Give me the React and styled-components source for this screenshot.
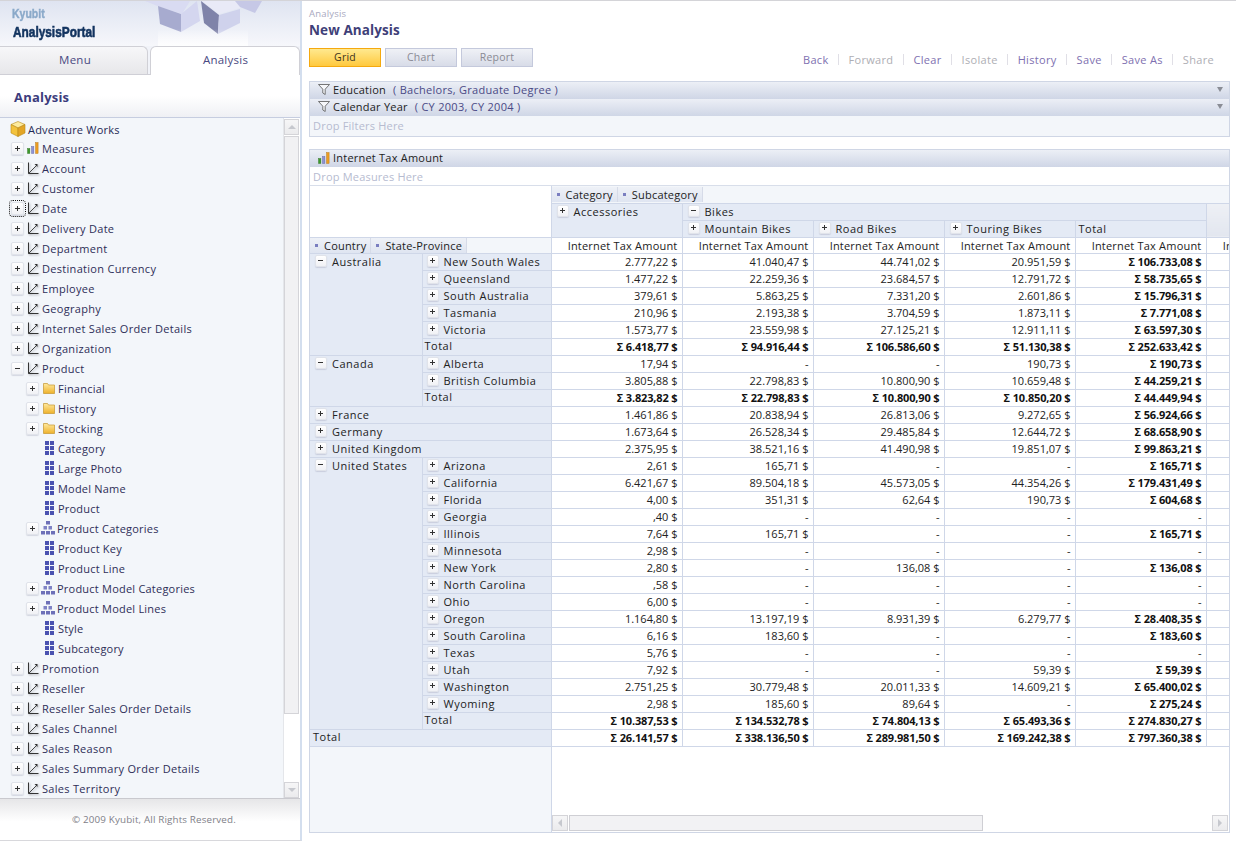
import React from "react";
import styled, { createGlobalStyle } from "styled-components";

const Global = createGlobalStyle`
  html, body { margin: 0; padding: 0; background: #fff; }
  body { font-family: "Open Sans", "Noto Sans", sans-serif; font-size: 11px; color: #222; overflow: hidden; }
  * { box-sizing: border-box; }
`;

const Page = styled.div`
  display: flex; width: 1236px; height: 841px; overflow: hidden; border-top: 1px solid #d4d4d8;
`;
const Sidebar = styled.aside`
  width: 302px; flex: none; display: flex; flex-direction: column;
  border-right: 2px solid #d3deee; border-bottom: 1px solid #d8d8dc; background: #fff;
`;
const Banner = styled.div`
  position: relative; height: 45px; flex: none; overflow: hidden;
  padding: 7px 0 0 12px;
  background: linear-gradient(180deg, #dfe4f1 0%, #f6f7fb 100%);
`;
const BannerArt = styled.svg`
  position: absolute; left: 140px; top: 0; width: 160px; height: 46px;
`;
const LogoSmall = styled.div`
  font-family: "Liberation Sans", sans-serif; transform: scaleX(.84); transform-origin: left center;
  font-weight: 700; font-size: 12.5px; line-height: 13px; color: #8aa9c9; -webkit-text-stroke: .4px #8aa9c9;
`;
const LogoBig = styled.div`
  font-family: "Liberation Sans", sans-serif; transform: scaleX(.79); transform-origin: left center;
  margin: 2px 0 0 1px;
  font-weight: 700; font-size: 15px; line-height: 17px; color: #12335f; -webkit-text-stroke: .6px #12335f;
`;
const Tabs = styled.div`
  height: 29px; flex: none; display: flex; align-items: flex-end; gap: 2px;
  background: #f1f3f9; border-bottom: 1px solid #cfcfd6;
`;
const Tab = styled.div`
  flex: ${p => (p.$active ? "1" : "none")}; width: ${p => (p.$active ? "auto" : "148px")};
  height: ${p => (p.$active ? "29px" : "28px")};
  margin-bottom: ${p => (p.$active ? "-1px" : "0")};
  display: flex; align-items: center; justify-content: center;
  padding: ${p => (p.$active ? "0 0 3px 1px" : "0 0 2px 3px")};
  font-size: 11.5px; letter-spacing: .25px; color: #4a4a82;
  border: 1px solid #d0d0d6; border-bottom: ${p => (p.$active ? "none" : "0")};
  border-left: ${p => (p.$active ? "1px solid #d0d0d6" : "none")};
  border-radius: ${p => (p.$active ? "6px 6px 0 0" : "0 6px 0 0")};
  background: ${p => (p.$active ? "#fff" : "linear-gradient(#f7f7f9, #e7e7ea)")};
`;
const PanelTitle = styled.div`
  height: 43px; flex: none; padding: 14px 0 0 14px;
  font-weight: 700; font-size: 13px; line-height: 17px; color: #3c3c7c; letter-spacing: .2px;
  background: linear-gradient(#fff 50%, #eff0f4 100%);
  border-bottom: 1px solid #c6cde0;
`;
const TreeArea = styled.div`
  flex: 1; min-height: 0; display: flex; background: #f3f6fa;
  border-bottom: 1px solid #c9c9ce;
`;
const TreeList = styled.div`
  flex: 1; min-width: 0; overflow: hidden;
`;
const Row = styled.div`
  height: 20px; display: flex; align-items: center; white-space: nowrap;
  padding-left: ${p => p.$indent}px;
  font-size: 11px; color: #2e2e58; letter-spacing: ${p => p.$track ?? 0.3}px;
`;
const Root = styled(Row)`
  padding: 2px 0 0 10px; gap: 2px; color: #1f2a55; letter-spacing: .2px;
`;
const Label = styled.span`
  display: inline-flex; margin-left: ${p => p.$gap}px;
`;
const Exp = styled.span`
  position: relative; width: 13px; height: 13px; flex: none; display: block;
  border: 1px solid #e0e3ea; border-radius: 2px;
  background: linear-gradient(#fff, #f0f1f5);
  box-shadow: 0 1px 1px rgba(120,125,150,.25);
  outline: ${p => (p.$focus ? "1px dotted #111" : "none")};
  outline-offset: 1px;
  &::before { content: ""; position: absolute; left: 3px; top: 5px; width: 5px; height: 1px; background: #333; }
  &::after { content: ""; display: ${p => (p.$open ? "none" : "block")}; position: absolute; left: 5px; top: 3px; width: 1px; height: 5px; background: #333; }
`;
const ScrollV = styled.div`
  width: 17px; flex: none; display: flex; flex-direction: column; background: #fff;
  border-left: 1px solid #e4e6ea;
`;
const ScrollBtn = styled.div`
  height: 16px; flex: none; margin: 1px 1px 0 0; display: flex; align-items: center; justify-content: center;
  border: 1px solid #d4d4d8; background: linear-gradient(#f6f6f7, #ebebed);
`;
const ScrollThumbV = styled.div`
  height: 578px; flex: none; margin: 1px 1px 0 0; border: 1px solid #d4d4d8; background: #f1f1f3;
`;
const Spacer = styled.div` flex: 1; `;
const Footer = styled.div`
  height: 41px; flex: none; display: flex; align-items: center; justify-content: center;
  padding-left: 8px; font-size: 9.8px; color: #808088; letter-spacing: .15px;
  background: linear-gradient(#e6e6e8, #fff 55%);
`;
const Main = styled.main`
  flex: 1; min-width: 0; padding: 6px 7px 8px 7px; display: flex; flex-direction: column;
`;
const Crumb = styled.div`
  font-size: 9.5px; line-height: 13px; color: #a9a9c0; letter-spacing: .18px;
`;
const Heading = styled.h1`
  margin: 1px 0 0; font-size: 13.5px; line-height: 18px; font-weight: 700; color: #3f3f78; letter-spacing: .1px;
`;
const Toolbar = styled.div`
  display: flex; align-items: center; margin-top: 8px; height: 20px;
`;
const ViewBtn = styled.div`
  width: 72px; height: 19px; margin-right: 4px; display: flex; align-items: center; justify-content: center;
  font-size: 10.5px; letter-spacing: .2px;
  color: ${p => (p.$active ? "#3a3320" : "#8a8a94")};
  border: 1px solid ${p => (p.$active ? "#f5a90f" : "#c4c9dc")};
  background: ${p => (p.$active ? "linear-gradient(#ffe98f, #ffc93e)" : "linear-gradient(#eff1f6, #d8dce8)")};
`;
const Actions = styled.div`
  margin-left: auto; margin-right: 15px; margin-top: 5px; display: flex; align-items: center;
  font-size: 11px; letter-spacing: .32px;
`;
const ActionLink = styled.span`
  color: ${p => (p.$off ? "#aeaeb4" : "#7e70b0")};
`;
const ActionSep = styled.span`
  width: 1px; height: 11px; margin: 0 9.5px; background: #e0dfe6;
`;
const FilterPanel = styled.section`
  margin-top: 14px; border: 1px solid #cfd6e5; background: #f3f6fa; width: 921px;
`;
const BandRow = styled.div`
  height: 17px; display: flex; align-items: center; padding: 0 0 2px 8px; font-size: 11px; letter-spacing: .22px; color: #222;
  background: linear-gradient(#eceff6, #cfd6e6);
`;
const BandValue = styled.span`
  color: #4b4a86; margin-left: 7px; letter-spacing: .28px;
`;
const BandArrow = styled.span`
  margin-left: auto; margin-right: 6px; width: 0; height: 0;
  border-left: 3px solid transparent; border-right: 3px solid transparent; border-top: 5px solid #8a8d96;
`;
const DropHint = styled.div`
  height: ${p => p.$h}px; display: flex; align-items: center; padding: 0 0 ${p => p.$lift || 0}px 3px;
  font-size: 11px; letter-spacing: .2px; color: #b6bbd0;
  border-bottom: ${p => (p.$line ? "1px solid #d8deea" : "none")};
`;
const MeasurePanel = styled.section`
  margin-top: 12px; flex: 1; min-height: 0; width: 921px; display: flex; flex-direction: column;
  border: 1px solid #cfd6e5; overflow: hidden;
`;
const PivotWrap = styled.div`
  flex: 1; min-height: 0; display: flex; flex-direction: column; overflow: hidden;
`;
const Table = styled.table`
  table-layout: fixed; border-collapse: collapse; width: 1027px; flex: none;
  font-size: 11px; letter-spacing: .2px; color: #222;
  td { padding: 0; height: 17px; line-height: 13px; border: 1px solid #cfd7e8; white-space: nowrap; overflow: hidden; vertical-align: top; }
  td:first-child { border-left: 0; }
  tr:first-child td { border-top: 0; }
`;
const ShortRow = styled.tr`
  td { height: 16px; }
`;
const Blank = styled.td` background: #fff; `;
const PillCell = styled.td`
  background: #f3f6fa; && { vertical-align: middle; }
`;
const Pills = styled.div`
  display: flex; align-items: center; height: 15px;
`;
const Pill = styled.span`
  display: inline-flex; align-items: center; height: 15px; padding: 0 4px 0 5px; gap: 6px;
  border-right: 1px solid #d6dbe8; color: #222;
  background: linear-gradient(#eef1f7, #dfe5f1);
  &::before { content: ""; width: 3px; height: 3px; background: #7a7ec0; }
`;
const HeadCell = styled.td`
  background: ${p => (p.$muted ? "linear-gradient(#eef0f5, #e2e6ef)" : "#e4eaf5")};
  letter-spacing: .5px;
`;
const CellInner = styled.div`
  display: flex; align-items: center; height: 15px; padding-left: ${p => p.$pad ?? 5}px; gap: 5px; color: #222;
`;
const SmallExp = styled(Exp)`
  width: 12px; height: 12px;
  &::before { left: 2px; top: 4px; width: 5px; }
  &::after { left: 4px; top: 2px; height: 5px; }
`;
const TotalLabel = styled.div`
  height: 15px; display: flex; align-items: center; padding-left: ${p => p.$pad ?? 3}px; margin-top: -1px;
`;
const Num = styled.td`
  text-align: right; background: #fff; && { padding-right: 4px; line-height: 15px; }
  font-weight: ${p => (p.$b ? 700 : 400)};
  color: ${p => (p.$b ? "#111" : "#222")};
  letter-spacing: ${p => (p.$b ? "-.15px" : "0")};
`;
const ColHead = styled(Num)`
  color: #222; font-weight: 400; letter-spacing: .2px;
`;
const RowHead = styled.td` background: #e4eaf5; letter-spacing: .5px; `;
const PivotBottom = styled.div`
  flex: 1; min-height: 0; display: flex;
`;
const LeftFill = styled.div`
  width: 242px; flex: none; background: #f3f6fa; border-right: 1px solid #cfd7e8;
`;
const RightFill = styled.div`
  flex: 1; min-width: 0; display: flex; align-items: flex-end; padding: 0 1px 1px 0; background: #fff;
`;
const ScrollH = styled.div`
  flex: 1; display: flex; height: 16px; gap: 1px;
`;
const ScrollHBtn = styled.div`
  width: 16px; height: 16px; flex: none; display: flex; align-items: center; justify-content: center;
  border: 1px solid #d4d4d8; background: linear-gradient(#f6f6f7, #ebebed);
`;
const ScrollHThumb = styled.div`
  width: 414px; height: 16px; flex: none; border: 1px solid #cfcfd4; background: #f2f2f4;
`;

const Tri = ({ d }) => {
  const pts = { up: "1,7 5,3 9,7", down: "1,3 9,3 5,7", left: "7,1 7,9 3,5", right: "3,1 3,9 7,5" }[d];
  return <svg width="10" height="10" viewBox="0 0 10 10"><polygon points={pts} fill="#c6c8ce" /></svg>;
};
const Cube = () => (
  <svg width="16" height="16" viewBox="0 0 16 16" style={{ flex: "none" }}>
    <polygon points="8,0.5 15,3.5 8,7 1,3.5" fill="#fdeb9e" stroke="#b98a1a" strokeWidth=".6" strokeLinejoin="round" />
    <polygon points="1,3.5 8,7 8,15.5 1,12" fill="#f3c23c" stroke="#b98a1a" strokeWidth=".6" strokeLinejoin="round" />
    <polygon points="15,3.5 8,7 8,15.5 15,12" fill="#e3a526" stroke="#b98a1a" strokeWidth=".6" strokeLinejoin="round" />
  </svg>
);
const Bars = () => (
  <svg width="12" height="12" viewBox="0 0 12 12" style={{ flex: "none" }}>
    <rect x=".5" y="6.5" width="2.4" height="5" fill="#3d9a2b" stroke="#2a6e1e" strokeWidth=".4" />
    <rect x="4.5" y="4.5" width="2.4" height="7" fill="#8f93d4" stroke="#5a5e9e" strokeWidth=".4" />
    <rect x="8.5" y=".5" width="2.6" height="11" fill="#eb9d22" stroke="#b06f12" strokeWidth=".4" />
  </svg>
);
const Axes = () => (
  <svg width="12" height="13" viewBox="0 0 12 13" style={{ flex: "none", filter: "drop-shadow(1px 1px 1px rgba(90,90,100,.5))" }}>
    <path d="M1.5 .5V11.5H11.5" fill="none" stroke="#333" strokeWidth="1" />
    <path d="M1.5 11.5L10 3" fill="none" stroke="#444" strokeWidth="1" />
    <path d="M7.5 2H10.5V5Z" fill="#333" />
  </svg>
);
const Folder = () => (
  <svg width="12" height="12" viewBox="0 0 12 12" style={{ flex: "none" }}>
    <defs><linearGradient id="fg" x1="0" y1="0" x2="0" y2="1"><stop offset="0" stopColor="#ffeaa0" /><stop offset="1" stopColor="#eeb12a" /></linearGradient></defs>
    <path d="M.5 1.5H4.5L5.5 3H11.5V11.5H.5Z" fill="url(#fg)" stroke="#c4952f" strokeWidth=".7" />
  </svg>
);
const Attr = () => (
  <svg width="9" height="14" viewBox="0 0 9 14" style={{ flex: "none" }}>
    {[0, 5, 10].map(y => [0, 5].map(x => <rect key={`${x}${y}`} x={x} y={y} width="4" height="4" fill="#4a52b0" />))}
  </svg>
);
const Hier = () => (
  <svg width="14" height="14" viewBox="0 0 14 14" style={{ flex: "none" }}>
    <rect x="5" y="0" width="4" height="3.5" fill="#6d70b8" />
    {[2.5, 7.5].map(x => <rect key={x} x={x} y="5" width="3.5" height="3.5" fill="#7e82c4" />)}
    {[0, 5, 10].map(x => <rect key={x} x={x} y="10" width="4" height="3.5" fill="#6d70b8" />)}
  </svg>
);
const Funnel = () => (
  <svg width="12" height="11" viewBox="0 0 12 11" style={{ flex: "none" }}>
    <path d="M.5 .5H11.5L7.2 5.2V10.5L4.8 9V5.2Z" fill="#f6f7fa" stroke="#555" strokeWidth=".8" />
  </svg>
);

const tree = [
  ["Measures", "m"], ["Account"], ["Customer"], ["Date", "d", true], ["Delivery Date"], ["Department"],
  ["Destination Currency"], ["Employee"], ["Geography"], ["Internet Sales Order Details"], ["Organization"],
];
const tree2 = ["Promotion", "Reseller", "Reseller Sales Order Details", "Sales Channel", "Sales Reason", "Sales Summary Order Details", "Sales Territory"];
const product = [
  ["Financial", "f"], ["History", "f"], ["Stocking", "f"], ["Category", "a"], ["Large Photo", "a"], ["Model Name", "a"], ["Product", "a"],
  ["Product Categories", "h"], ["Product Key", "a"], ["Product Line", "a"], ["Product Model Categories", "h"], ["Product Model Lines", "h"], ["Style", "a"], ["Subcategory", "a"],
];

const Dim = ({ name, icon, focus, open }) => (
  <Row $indent={11}>
    <Exp $focus={focus} $open={open} />
    <Label $gap={3}>{icon === "m" ? <Bars /> : <Axes />}</Label>
    <Label $gap={3}>{name}</Label>
  </Row>
);
const Child = ({ name, kind }) => {
  if (kind === "a") return <Row $indent={45} $track={0.2}><Attr /><Label $gap={4}>{name}</Label></Row>;
  return (
    <Row $indent={26} $track={0.22}>
      <Exp />
      <Label $gap={kind === "f" ? 4 : 2}>{kind === "f" ? <Folder /> : <Hier />}</Label>
      <Label $gap={kind === "f" ? 3 : 2}>{name}</Label>
    </Row>
  );
};

const D = "-";
const groups = [
  { name: "Australia", rows: [
    ["New South Wales", "2.777,22 $", "41.040,47 $", "44.741,02 $", "20.951,59 $", "Σ 106.733,08 $"],
    ["Queensland", "1.477,22 $", "22.259,36 $", "23.684,57 $", "12.791,72 $", "Σ 58.735,65 $"],
    ["South Australia", "379,61 $", "5.863,25 $", "7.331,20 $", "2.601,86 $", "Σ 15.796,31 $"],
    ["Tasmania", "210,96 $", "2.193,38 $", "3.704,59 $", "1.873,11 $", "Σ 7.771,08 $"],
    ["Victoria", "1.573,77 $", "23.559,98 $", "27.125,21 $", "12.911,11 $", "Σ 63.597,30 $"],
  ], total: ["Σ 6.418,77 $", "Σ 94.916,44 $", "Σ 106.586,60 $", "Σ 51.130,38 $", "Σ 252.633,42 $"] },
  { name: "Canada", rows: [
    ["Alberta", "17,94 $", D, D, "190,73 $", "Σ 190,73 $"],
    ["British Columbia", "3.805,88 $", "22.798,83 $", "10.800,90 $", "10.659,48 $", "Σ 44.259,21 $"],
  ], total: ["Σ 3.823,82 $", "Σ 22.798,83 $", "Σ 10.800,90 $", "Σ 10.850,20 $", "Σ 44.449,94 $"] },
  { name: "France", flat: ["1.461,86 $", "20.838,94 $", "26.813,06 $", "9.272,65 $", "Σ 56.924,66 $"] },
  { name: "Germany", flat: ["1.673,64 $", "26.528,34 $", "29.485,84 $", "12.644,72 $", "Σ 68.658,90 $"] },
  { name: "United Kingdom", flat: ["2.375,95 $", "38.521,16 $", "41.490,98 $", "19.851,07 $", "Σ 99.863,21 $"] },
  { name: "United States", rows: [
    ["Arizona", "2,61 $", "165,71 $", D, D, "Σ 165,71 $"],
    ["California", "6.421,67 $", "89.504,18 $", "45.573,05 $", "44.354,26 $", "Σ 179.431,49 $"],
    ["Florida", "4,00 $", "351,31 $", "62,64 $", "190,73 $", "Σ 604,68 $"],
    ["Georgia", ",40 $", D, D, D, D],
    ["Illinois", "7,64 $", "165,71 $", D, D, "Σ 165,71 $"],
    ["Minnesota", "2,98 $", D, D, D, D],
    ["New York", "2,80 $", D, "136,08 $", D, "Σ 136,08 $"],
    ["North Carolina", ",58 $", D, D, D, D],
    ["Ohio", "6,00 $", D, D, D, D],
    ["Oregon", "1.164,80 $", "13.197,19 $", "8.931,39 $", "6.279,77 $", "Σ 28.408,35 $"],
    ["South Carolina", "6,16 $", "183,60 $", D, D, "Σ 183,60 $"],
    ["Texas", "5,76 $", D, D, D, D],
    ["Utah", "7,92 $", D, D, "59,39 $", "Σ 59,39 $"],
    ["Washington", "2.751,25 $", "30.779,48 $", "20.011,33 $", "14.609,21 $", "Σ 65.400,02 $"],
    ["Wyoming", "2,98 $", "185,60 $", "89,64 $", D, "Σ 275,24 $"],
  ], total: ["Σ 10.387,53 $", "Σ 134.532,78 $", "Σ 74.804,13 $", "Σ 65.493,36 $", "Σ 274.830,27 $"] },
];
const grand = ["Σ 26.141,57 $", "Σ 338.136,50 $", "Σ 289.981,50 $", "Σ 169.242,38 $", "Σ 797.360,38 $"];

const Cells = ({ vals, bold }) => (
  <>
    {vals.map((v, i) => <Num key={i} $b={bold || (i === 4 && v !== D)}>{v}</Num>)}
    <Num />
  </>
);

const pivotRows = groups.flatMap(g => {
  if (g.flat) {
    return [
      <tr key={g.name}>
        <RowHead colSpan={2}><CellInner><SmallExp />{g.name}</CellInner></RowHead>
        <Cells vals={g.flat} />
      </tr>,
    ];
  }
  const out = g.rows.map((r, i) => (
    <tr key={g.name + r[0]}>
      {i === 0 && <RowHead rowSpan={g.rows.length + 1}><CellInner><SmallExp $open />{g.name}</CellInner></RowHead>}
      <RowHead><CellInner $pad={4}><SmallExp />{r[0]}</CellInner></RowHead>
      <Cells vals={r.slice(1)} />
    </tr>
  ));
  out.push(
    <tr key={g.name + "total"}>
      <RowHead><TotalLabel $pad={2}>Total</TotalLabel></RowHead>
      <Cells vals={g.total} bold />
    </tr>
  );
  return out;
});

export default function App() {
  return (
    <>
      <Global />
      <Page>
        <Sidebar>
          <Banner>
            <BannerArt viewBox="0 0 160 46">
              <defs>
                <linearGradient id="fade" x1="0" y1="0" x2="0" y2="1">
                  <stop offset="0" stopColor="#fff" stopOpacity="0" />
                  <stop offset="1" stopColor="#fff" stopOpacity=".9" />
                </linearGradient>
              </defs>
              <polygon points="5,0 50,0 42,13 20,6" fill="#d9dbf2" />
              <polygon points="18,5 41,13 41,31 20,23" fill="#a7abcf" />
              <polygon points="41,13 57,0 60,20 41,31" fill="#d4d6ef" />
              <polygon points="61,0 79,14 78,33 64,22" fill="#7f83a9" />
              <polygon points="79,14 100,8 100,22 78,33" fill="#cfd2ec" />
              <polygon points="62,0 104,0 100,7 79,13" fill="#e9eaf7" />
              <polygon points="95,0 122,0 115,12 100,6" fill="#c6c8e6" />
              <rect x="18" y="28" width="90" height="18" fill="url(#fade)" />
            </BannerArt>
            <LogoSmall>Kyubit</LogoSmall>
            <LogoBig>AnalysisPortal</LogoBig>
          </Banner>
          <Tabs>
            <Tab>Menu</Tab>
            <Tab $active>Analysis</Tab>
          </Tabs>
          <PanelTitle>Analysis</PanelTitle>
          <TreeArea>
            <TreeList>
              <Root><Cube /><span>Adventure Works</span></Root>
              {tree.map(([n, ic, f]) => <Dim key={n} name={n} icon={ic} focus={f} />)}
              <Dim name="Product" open />
              {product.map(([n, k]) => <Child key={n} name={n} kind={k} />)}
              {tree2.map(n => <Dim key={n} name={n} />)}
            </TreeList>
            <ScrollV>
              <ScrollBtn><Tri d="up" /></ScrollBtn>
              <ScrollThumbV />
              <Spacer />
              <ScrollBtn><Tri d="down" /></ScrollBtn>
            </ScrollV>
          </TreeArea>
          <Footer>© 2009 Kyubit, All Rights Reserved.</Footer>
        </Sidebar>
        <Main>
          <Crumb>Analysis</Crumb>
          <Heading>New Analysis</Heading>
          <Toolbar>
            <ViewBtn $active>Grid</ViewBtn>
            <ViewBtn>Chart</ViewBtn>
            <ViewBtn>Report</ViewBtn>
            <Actions>
              <ActionLink>Back</ActionLink><ActionSep />
              <ActionLink $off>Forward</ActionLink><ActionSep />
              <ActionLink>Clear</ActionLink><ActionSep />
              <ActionLink $off>Isolate</ActionLink><ActionSep />
              <ActionLink>History</ActionLink><ActionSep />
              <ActionLink>Save</ActionLink><ActionSep />
              <ActionLink>Save As</ActionLink><ActionSep />
              <ActionLink $off>Share</ActionLink>
            </Actions>
          </Toolbar>
          <FilterPanel>
            <BandRow><Funnel /><Label $gap={3}>Education</Label><BandValue>( Bachelors, Graduate Degree )</BandValue><BandArrow /></BandRow>
            <BandRow><Funnel /><Label $gap={3}>Calendar Year</Label><BandValue>( CY 2003, CY 2004 )</BandValue><BandArrow /></BandRow>
            <DropHint $h={20} $lift={2}>Drop Filters Here</DropHint>
          </FilterPanel>
          <MeasurePanel>
            <BandRow><Bars /><Label $gap={3}>Internet Tax Amount</Label></BandRow>
            <DropHint $h={19} $line>Drop Measures Here</DropHint>
            <PivotWrap>
              <Table>
                <colgroup>
                  <col style={{ width: 112 }} /><col style={{ width: 129 }} />
                  <col style={{ width: 131 }} /><col style={{ width: 131 }} /><col style={{ width: 131 }} />
                  <col style={{ width: 131 }} /><col style={{ width: 131 }} /><col style={{ width: 131 }} />
                </colgroup>
                <tbody>
                  <tr>
                    <Blank colSpan={2} rowSpan={3} />
                    <PillCell colSpan={6}><Pills><Pill>Category</Pill><Pill>Subcategory</Pill></Pills></PillCell>
                  </tr>
                  <tr>
                    <HeadCell rowSpan={2}><CellInner><SmallExp />Accessories</CellInner></HeadCell>
                    <HeadCell colSpan={4}><CellInner><SmallExp $open />Bikes</CellInner></HeadCell>
                    <HeadCell rowSpan={2} $muted />
                  </tr>
                  <tr>
                    <HeadCell><CellInner><SmallExp />Mountain Bikes</CellInner></HeadCell>
                    <HeadCell><CellInner><SmallExp />Road Bikes</CellInner></HeadCell>
                    <HeadCell><CellInner><SmallExp />Touring Bikes</CellInner></HeadCell>
                    <HeadCell><CellInner $pad={3}>Total</CellInner></HeadCell>
                  </tr>
                  <ShortRow>
                    <PillCell colSpan={2}><Pills><Pill>Country</Pill><Pill>State-Province</Pill></Pills></PillCell>
                    {[0, 1, 2, 3, 4, 5].map(i => <ColHead key={i}>Internet Tax Amount</ColHead>)}
                  </ShortRow>
                  {pivotRows}
                  <tr>
                    <RowHead colSpan={2}><TotalLabel>Total</TotalLabel></RowHead>
                    <Cells vals={grand} bold />
                  </tr>
                </tbody>
              </Table>
              <PivotBottom>
                <LeftFill />
                <RightFill>
                  <ScrollH>
                    <ScrollHBtn><Tri d="left" /></ScrollHBtn>
                    <ScrollHThumb />
                    <Spacer />
                    <ScrollHBtn><Tri d="right" /></ScrollHBtn>
                  </ScrollH>
                </RightFill>
              </PivotBottom>
            </PivotWrap>
          </MeasurePanel>
        </Main>
      </Page>
    </>
  );
}
